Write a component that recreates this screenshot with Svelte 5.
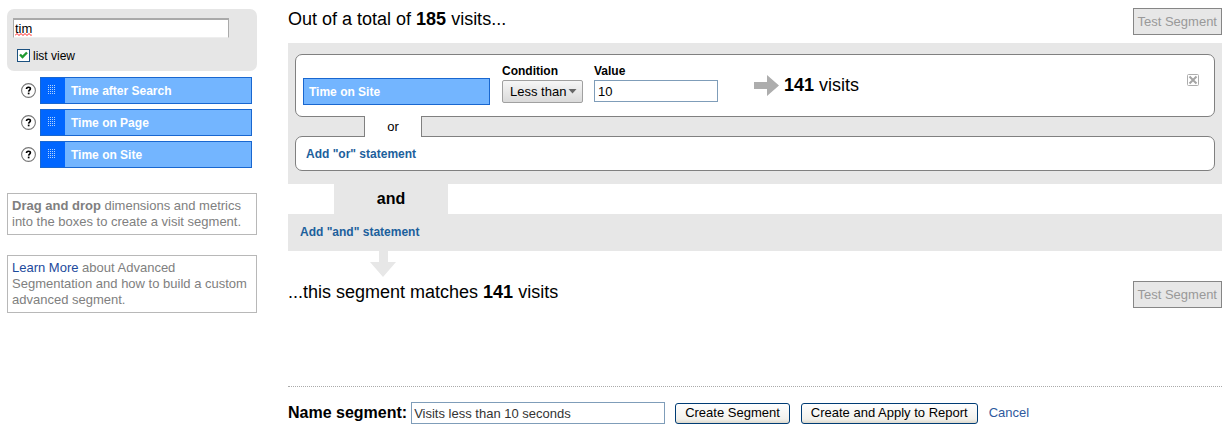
<script>
  let query = $state('tim');
  let listView = $state(true);
  let condition = $state('Less than');
  let value = $state('10');
  let segmentName = $state('Visits less than 10 seconds');

  const dimensions = ['Time after Search', 'Time on Page', 'Time on Site'];
  const gripRows = [0, 2, 4, 6, 8];
  const gripCols = [0, 2, 4, 6];
</script>

<div class="page">
  <aside class="sidebar">
    <div class="search">
      <div class="query">
        <input type="text" aria-label="Search dimensions and metrics" spellcheck="false" bind:value={query} />
        <svg width="17" height="3" viewBox="0 0 17 3" aria-hidden="true">
          <path d="M0 2.5l2-2 2 2 2-2 2 2 2-2 2 2 2-2 2 2 1-1" fill="none" stroke="#f00" stroke-width=".9" />
        </svg>
      </div>
      <label class="toggle">
        <input type="checkbox" bind:checked={listView} />
        <span>list view</span>
      </label>
    </div>

    <ul class="dimensions">
      {#each dimensions as name}
        <li>
          <button class="help" type="button" aria-label="About {name}">
            <svg width="15" height="15" viewBox="0 0 15 15" aria-hidden="true">
              <circle cx="7.5" cy="7.5" r="6.9" fill="#fff" stroke="#777" stroke-width="1.1" />
              <path d="M5.5 5.9C5.5 4.7 6.3 4.2 7.5 4.2s1.9.7 1.9 1.6c0 1.2-1.6 1.4-1.8 2.8" fill="none" stroke="#000" stroke-width="1.6" />
              <rect x="6.8" y="9.6" width="1.7" height="1.7" fill="#000" />
            </svg>
          </button>
          <div class="chip">
            <span class="grip">
              <svg width="7" height="9" viewBox="0 0 7 9" aria-hidden="true">
                {#each gripRows as y}
                  {#each gripCols as x}
                    <rect {x} {y} width="1" height="1" fill="#b4d4ff" />
                  {/each}
                {/each}
              </svg>
            </span>
            <span class="chip-name">{name}</span>
          </div>
        </li>
      {/each}
    </ul>

    <p class="note"><b>Drag and drop</b> dimensions and metrics into the boxes to create a visit segment.</p>
    <p class="note"><a href="#learn">Learn More</a> about Advanced Segmentation and how to build a custom advanced segment.</p>
  </aside>

  <main class="builder">
    <div class="summary">
      <h1>Out of a total of <b>185</b> visits...</h1>
      <button class="test" type="button" disabled>Test Segment</button>
    </div>

    <section class="group">
      <div class="card rule">
        <div class="metric">Time on Site</div>
        <div class="field condition">
          <label for="condition">Condition</label>
          <div class="select">
            <select id="condition" bind:value={condition}>
              <option>Less than</option>
              <option>Equal to</option>
              <option>Greater than</option>
            </select>
            <svg width="9" height="5" viewBox="0 0 9 5" aria-hidden="true"><path d="M0.5 0h8L4.5 4.5z" fill="#666" /></svg>
          </div>
        </div>
        <div class="field value">
          <label for="value">Value</label>
          <input id="value" type="text" bind:value />
        </div>
        <div class="result">
          <svg width="25" height="21" viewBox="0 0 25 21" aria-hidden="true"><path d="M0 7h13V0l12 10.5L13 21v-7H0z" fill="#adadad" /></svg>
          <span><b>141</b> visits</span>
        </div>
        <button class="remove" type="button" aria-label="Remove rule">
          <svg width="12" height="12" viewBox="0 0 12 12" aria-hidden="true">
            <rect x=".5" y=".5" width="11" height="11" rx="1" fill="#fff" stroke="#adadad" />
            <path d="M2.5 2.5l7 7M9.5 2.5l-7 7" stroke="#a4a4a4" stroke-width="2" />
          </svg>
        </button>
      </div>
      <div class="or">or</div>
      <div class="card add"><a href="#or">Add "or" statement</a></div>
    </section>

    <div class="and">and</div>
    <section class="add-and"><a href="#and">Add "and" statement</a></section>
    <svg class="down" width="26" height="26" viewBox="0 0 26 26" aria-hidden="true"><path d="M9 0h9v11h8L13 26 0 11h9z" fill="#e7e7e7" /></svg>

    <div class="summary matches">
      <h2>...this segment matches <b>141</b> visits</h2>
      <button class="test" type="button" disabled>Test Segment</button>
    </div>

    <form class="save" onsubmit={(event) => event.preventDefault()}>
      <label for="segment-name">Name segment:</label>
      <input id="segment-name" type="text" bind:value={segmentName} />
      <button class="action" type="submit">Create Segment</button>
      <button class="action" type="button">Create and Apply to Report</button>
      <a href="#cancel">Cancel</a>
    </form>
  </main>
</div>

<style>
  :global(body) {
    margin: 0;
    background: #fff;
  }

  .page {
    display: flex;
    gap: 31px;
    padding: 8px 7px;
    font: 13px/16px "Liberation Sans", Arial, sans-serif;
    color: #000;
  }

  .page *,
  .page {
    box-sizing: border-box;
  }

  input,
  select,
  button {
    margin: 0;
    font: inherit;
    color: inherit;
    border-radius: 0;
  }

  a {
    color: #1c609c;
    text-decoration: none;
  }

  .sidebar {
    flex: 0 0 250px;
    padding-top: 1px;
  }

  .search {
    padding: 9px 6px 8px;
    border-radius: 7px;
    background: #e6e6e6;
  }

  .query {
    position: relative;
  }

  .query input {
    display: block;
    width: 216px;
    height: 20px;
    padding: 1px;
    border: 1px solid #aaa;
    border-top-width: 2px;
    border-bottom-color: #eee;
    background: #fff;
  }

  /* Spelling mark under the typed text */
  .query svg {
    position: absolute;
    left: 2px;
    bottom: 2px;
    pointer-events: none;
  }

  .toggle {
    display: flex;
    align-items: center;
    gap: 3px;
    margin: 9px 4px 0;
    font-size: 12px;
  }

  .toggle input {
    appearance: none;
    width: 13px;
    height: 13px;
    border: 1px solid #1c5180;
    background: #fff;
  }

  .toggle input:checked {
    background: #fff url("data:image/svg+xml,%3Csvg xmlns='http://www.w3.org/2000/svg' viewBox='0 0 11 11'%3E%3Cpath d='M2 4.5l2.5 2.5L9 2.5' fill='none' stroke='%23219a31' stroke-width='2.4'/%3E%3C/svg%3E");
  }

  .toggle span {
    padding-top: 2px;
  }

  .toggle {
    height: 16px;
  }

  .dimensions {
    display: grid;
    gap: 5px;
    margin: 6px 5px 25px 14px;
    padding: 0;
    list-style: none;
  }

  .dimensions li {
    display: flex;
    align-items: center;
    gap: 4px;
  }

  .help,
  .remove {
    display: flex;
    padding: 0;
    border: 0;
    background: none;
  }

  .chip,
  .metric {
    display: flex;
    align-items: center;
    height: 27px;
    border: 1px solid #1967d0;
    background: #73b5ff;
    color: #fff;
    font-size: 12px;
    font-weight: bold;
  }

  .chip {
    flex: 1;
  }

  .grip {
    display: flex;
    align-self: stretch;
    justify-content: center;
    width: 24px;
    padding: 7px 3px 0 0;
    background: #06f;
  }

  .chip-name {
    padding-left: 6px;
  }

  .note {
    margin: 0 0 20px;
    padding: 4px;
    border: 1px solid #b8b8b8;
    color: #808080;
  }

  .note a {
    color: #1c4a9c;
  }

  .builder {
    flex: 1;
    min-width: 0;
  }

  .summary {
    display: flex;
    justify-content: space-between;
    align-items: flex-start;
  }

  h1,
  h2 {
    margin: 0;
    font-size: 18px;
    line-height: 22px;
    font-weight: normal;
  }

  .test {
    height: 27px;
    padding: 0 4px;
    border: 1px solid #868686;
    background: #e7e7e7;
    color: #999;
  }

  .group {
    margin-top: 8px;
    padding: 11px 7px 13px;
    background: #e7e7e7;
  }

  .card {
    border: 1px solid #808080;
    border-radius: 7px;
    background: #fff;
  }

  .rule {
    display: flex;
    align-items: flex-start;
    padding: 8px 15px 11px 7px;
  }

  .metric {
    width: 187px;
    margin-top: 15px;
    padding-left: 5px;
  }

  .field label {
    display: block;
    font-size: 12px;
    font-weight: bold;
  }

  .condition {
    margin-left: 12px;
  }

  .select {
    position: relative;
    margin-top: 1px;
  }

  .select select {
    appearance: none;
    display: block;
    width: 81px;
    height: 23px;
    padding: 0 15px 0 7px;
    border: 1px solid #a0a0a0;
    border-radius: 2px;
    background: linear-gradient(#f6f6f6, #dadada);
  }

  .select svg {
    position: absolute;
    top: 9px;
    right: 6px;
    pointer-events: none;
  }

  .value {
    margin-left: 11px;
  }

  .value input,
  .save input {
    display: block;
    height: 22px;
    padding: 0 3px;
    border: 1px solid #7f9db9;
    background: #fff;
  }

  .value input {
    width: 124px;
    margin-top: 1px;
  }

  .result {
    display: flex;
    align-items: center;
    gap: 5px;
    margin: 11px auto 0 36px;
    font-size: 18px;
    line-height: 22px;
  }

  .remove {
    margin-top: 11px;
  }

  .or {
    position: relative;
    width: 58px;
    margin: -1px 0 -1px 69px;
    padding: 3px 0 2px;
    border: solid #808080;
    border-width: 0 1px;
    background: #fff;
    text-align: center;
  }

  .add {
    padding: 9px 10px 8px;
  }

  .add a,
  .add-and a {
    font-size: 12px;
    font-weight: bold;
  }

  .and {
    width: 114px;
    margin-left: 46px;
    background: #e7e7e7;
    font-size: 16px;
    line-height: 30px;
    font-weight: bold;
    text-align: center;
  }

  .add-and {
    padding: 10px 12px 11px;
    background: #e7e7e7;
  }

  .down {
    display: block;
    margin-left: 82px;
  }

  .matches {
    margin-top: 4px;
  }

  .save {
    display: flex;
    align-items: center;
    margin-top: 78px;
    padding-top: 15px;
    border-top: 1px dotted #aaa;
  }

  .save label {
    font-size: 16px;
    font-weight: bold;
  }

  .save input {
    width: 254px;
    margin: 0 10px 0 4px;
    padding: 0 2px;
    color: #333;
  }

  .action {
    height: 21px;
    margin-right: 11px;
    padding: 0 9px;
    border: 1px solid #003c74;
    border-radius: 3px;
    background: linear-gradient(#fff, #f2f1ec 80%, #dcd8cc);
    line-height: 18px;
  }

  .save a {
    color: #2f5a9e;
  }
</style>
